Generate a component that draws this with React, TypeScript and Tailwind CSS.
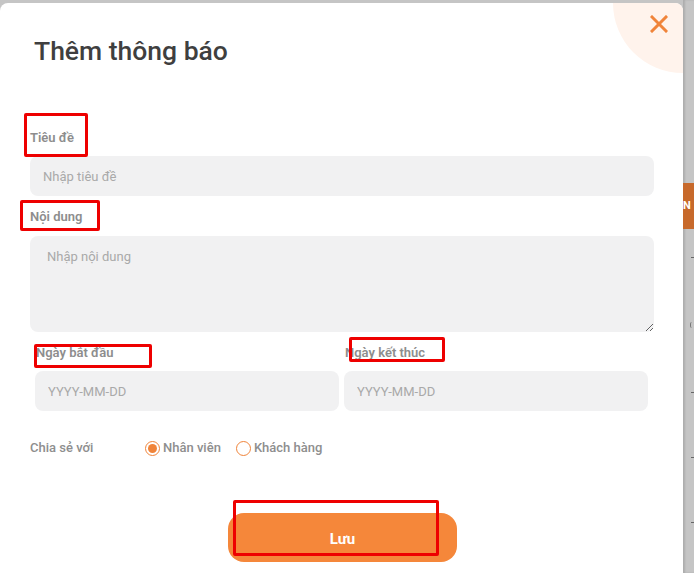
import { useState } from "react";

const font = { fontFamily: "Roboto, 'Noto Sans', sans-serif" };

function Radio({ checked, label, onClick }: { checked: boolean; label: string; onClick: () => void }) {
  return (
    <button type="button" onClick={onClick} className="flex items-center gap-[3px]">
      <span className="w-[15px] h-[15px] rounded-full border-[1.5px] border-[#f0843a] flex items-center justify-center bg-white">
        {checked && <span className="w-[9px] h-[9px] rounded-full bg-[#f0843a]" />}
      </span>
      <span className="text-[13px] font-medium text-[#8e8e8e]">{label}</span>
    </button>
  );
}

export default function App() {
  const [share, setShare] = useState("staff");

  return (
    <div className="relative w-[694px] h-[573px] overflow-hidden bg-[#c5c5c5] flex" style={font}>
      <div className="relative mt-[3px] w-[683px] h-[620px] shrink-0 bg-white rounded-lg overflow-hidden">
        <div className="absolute -top-[70px] -right-[70px] w-[140px] h-[140px] rounded-full bg-[#fff3ec]" />
        <button className="absolute top-[11px] right-[14px] w-[20px] h-[20px] flex items-center justify-center">
          <svg width="18" height="18" viewBox="0 0 18 18">
            <path d="M2 2 L16 16 M16 2 L2 16" stroke="#f0843a" strokeWidth="3" strokeLinecap="square" />
          </svg>
        </button>

        <h1 className="relative pl-[34px] pt-[33px] text-[26.5px] leading-[30px] font-medium text-[#3f3f3f]">Thêm thông báo</h1>

        <div className="px-[30px] w-[684px]">
          <label className="block mt-[64px] text-[13px] leading-[16px] font-semibold text-[#8d8d8d]">Tiêu đề</label>
          <input
            placeholder="Nhập tiêu đề"
            className="mt-[10px] w-[624px] h-[40px] rounded-lg bg-[#f1f1f2] px-[13px] text-[13px] outline-none placeholder:text-[#a9a9a9]"
          />

          <label className="block mt-[13px] text-[13px] leading-[16px] font-semibold text-[#8d8d8d]">Nội dung</label>
          <textarea
            placeholder="Nhập nội dung"
            className="block mt-[11px] w-[624px] h-[96px] rounded-lg bg-[#f1f1f2] px-[17px] py-[11px] text-[13px] outline-none placeholder:text-[#a9a9a9]"
          />

          <div className="mt-[13px] ml-[5px] w-[613px] flex gap-[5px]">
            <div className="flex-1">
              <label className="block pl-[1px] text-[13px] leading-[16px] font-semibold text-[#8d8d8d]">Ngày bắt đầu</label>
              <input
                placeholder="YYYY-MM-DD"
                className="mt-[10px] w-full h-[40px] rounded-lg bg-[#f1f1f2] px-[13px] text-[13px] outline-none placeholder:text-[#a9a9a9]"
              />
            </div>
            <div className="flex-1">
              <label className="block pl-[1px] text-[13px] leading-[16px] font-semibold text-[#8d8d8d]">Ngày kết thúc</label>
              <input
                placeholder="YYYY-MM-DD"
                className="mt-[10px] w-full h-[40px] rounded-lg bg-[#f1f1f2] px-[13px] text-[13px] outline-none placeholder:text-[#a9a9a9]"
              />
            </div>
          </div>

          <div className="mt-[27px] h-[20px] flex items-center">
            <span className="w-[115px] text-[13px] font-medium text-[#8e8e8e]">Chia sẻ với</span>
            <div className="flex items-center gap-[15px]">
              <Radio checked={share === "staff"} label="Nhân viên" onClick={() => setShare("staff")} />
              <Radio checked={share === "customer"} label="Khách hàng" onClick={() => setShare("customer")} />
            </div>
          </div>

          <button className="mt-[55px] ml-[198px] w-[229px] h-[49px] pt-[3px] rounded-2xl bg-[#f5873a] text-white text-[15px] font-bold">
            Lưu
          </button>
        </div>
      </div>

      <div className="flex-1 relative shadow-[inset_2px_0_2px_rgba(0,0,0,0.12)]">
        <div className="mt-[183px] h-[46px] bg-[#c7692b] overflow-hidden flex items-center">
          <span className="text-white text-[11px] font-bold">N</span>
        </div>
        <div className="flex flex-col items-end gap-[64px] mt-[28px]">
          <div className="w-[3px] h-[1px] bg-[#666]" />
          <div className="w-[2px] h-[6px] border-l border-[#777] rounded-l-full mr-[2px]" />
          <div className="w-[3px] h-[1px] bg-[#666]" />
          <div className="w-[3px] h-[1px] bg-[#666]" />
          <div className="w-[3px] h-[1px] bg-[#666]" />
        </div>
      </div>

      <div className="absolute left-[24px] top-[113px] w-[64px] h-[44px] border-[3px] border-[#ee0000] rounded-[2px]" />
      <div className="absolute left-[20px] top-[200px] w-[80px] h-[31px] border-[3px] border-[#ee0000] rounded-[2px]" />
      <div className="absolute left-[34px] top-[344px] w-[118px] h-[24px] border-[3px] border-[#ee0000] rounded-[2px]" />
      <div className="absolute left-[349px] top-[337px] w-[96px] h-[25px] border-[3px] border-[#ee0000] rounded-[2px]" />
      <div className="absolute left-[233px] top-[500px] w-[206px] h-[56px] border-[3px] border-[#ee0000] rounded-[2px]" />
    </div>
  );
}
